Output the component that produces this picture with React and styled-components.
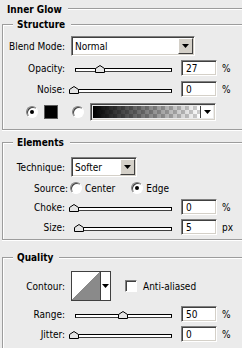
import React from 'react';
import styled, { createGlobalStyle, css } from 'styled-components';

const GlobalStyle = createGlobalStyle`
  html, body {
    margin: 0;
    padding: 0;
    background: #ebebeb;
    overflow: hidden;
  }
  body {
    font-family: "DejaVu Sans Condensed", "Liberation Sans", sans-serif;
    font-size: 10px;
    color: #000;
  }
`;

const sunken = css`
  box-sizing: border-box;
  border: 1px solid;
  border-color: #808080 #fff #fff #808080;
  box-shadow: inset 1px 1px 0 #404040, inset -1px -1px 0 #d4d0c8;
`;

const Panel = styled.div`
  width: 242px;
  height: 348px;
  overflow: hidden;
  background: #ebebeb;
`;

const Header = styled.div`
  display: flex;
  align-items: center;
  gap: 6px;
  height: 18px;
  padding-left: 7px;
  font-weight: bold;
`;

const Rule = styled.div`
  flex: 1;
  border-top: 1px solid #9c9c9c;
  border-bottom: 1px solid #fff;
`;

const Group = styled.fieldset`
  margin: ${p => p.$mt}px -20px 0 2px;
  padding: ${p => p.$pt}px 0 ${p => p.$pb}px 0;
  border: 1px solid #9c9c9c;
  box-shadow: inset 1px 1px 0 #fff, 0 1px 0 #fff;
  min-width: 0;
`;

const Legend = styled.legend`
  margin-left: 10px;
  padding: 0 6px 0 4px;
  line-height: 13px;
  font-weight: bold;
  background: #ebebeb;
`;

const Row = styled.div`
  display: flex;
  align-items: center;
  height: ${p => p.$h}px;
  margin-top: ${p => p.$mt || 0}px;
  padding-left: ${p => p.$pl || 0}px;
`;

const Label = styled.span`
  flex: none;
  width: ${p => p.$w || 62}px;
  margin-right: ${p => (p.$gap === undefined ? 6 : p.$gap)}px;
  text-align: right;
  white-space: nowrap;
`;

const Select = styled.div`
  ${sunken}
  width: ${p => p.$w}px;
  height: 20px;
  padding: 1px 1px 1px 3px;
  background: #fff;
  display: flex;
  align-items: center;
  justify-content: space-between;
`;

const DropButton = styled.span`
  box-sizing: border-box;
  width: 15px;
  height: 16px;
  background: #d4d0c8;
  border: 1px solid;
  border-color: #fff #404040 #404040 #fff;
  display: flex;
  align-items: center;
  justify-content: center;
`;

const NumBox = styled.input`
  ${sunken}
  width: 36px;
  height: 16px;
  margin: 0;
  padding: 0 0 0 4px;
  background: #fff;
  font: inherit;
  color: #000;
  outline: none;
`;

const Unit = styled.span`
  margin-left: 5px;
`;

const SliderWrap = styled.div`
  position: relative;
  flex: none;
  width: 104px;
  height: 10px;
  margin-right: 6px;
`;

const Track = styled.div`
  position: absolute;
  left: 4px;
  right: 3px;
  bottom: 1px;
  height: 2px;
  border: 1px solid #000;
  border-bottom-color: #404040;
  background: #fff;
`;

const Thumb = styled.svg`
  position: absolute;
  top: 2px;
  width: 10px;
  height: 8px;
`;

const Radio = styled.span`
  position: relative;
  flex: none;
  box-sizing: border-box;
  width: 12px;
  height: 12px;
  margin-left: ${p => p.$ml || 0}px;
  border-radius: 50%;
  background: #fff;
  border: 1px solid;
  border-color: #808080 #fff #fff #808080;
  box-shadow: inset 1px 1px 0 #404040;
  &::after {
    content: '';
    display: ${p => (p.$checked ? 'block' : 'none')};
    position: absolute;
    left: 3px;
    top: 3px;
    width: 4px;
    height: 4px;
    border-radius: 50%;
    background: #000;
  }
`;

const RadioText = styled.span`
  margin-left: 3px;
`;

const Swatch = styled.span`
  flex: none;
  width: 14px;
  height: 14px;
  margin-left: 6px;
  box-sizing: border-box;
  border: 1px solid #5a5a5a;
  background: #000;
`;

const GradientBox = styled.div`
  ${sunken}
  display: flex;
  width: 126px;
  height: 18px;
  margin-left: 6px;
  padding: 2px;
`;

const GradientFill = styled.span`
  flex: 1;
  background:
    linear-gradient(to right, #000, rgba(0, 0, 0, 0)),
    conic-gradient(#cfcfcf 25%, #fff 0 50%, #cfcfcf 0 75%, #fff 0) 0 0 / 8px 8px;
`;

const GradientArrow = styled.span`
  width: 12px;
  border-left: 1px solid #404040;
  background: #fff;
  display: flex;
  align-items: center;
  justify-content: center;
`;

const ContourBox = styled.div`
  box-sizing: border-box;
  display: flex;
  width: 40px;
  height: 30px;
  border: 1px solid #404040;
  background: #fff;
`;

const ContourPreview = styled.span`
  width: 28px;
  background: linear-gradient(to bottom right, #fff 50%, #8a8a8a 50%);
  border-right: 1px solid #404040;
`;

const ContourArrow = styled.span`
  flex: 1;
  display: flex;
  align-items: center;
  justify-content: center;
`;

const Check = styled.span`
  flex: none;
  width: 12px;
  height: 12px;
  margin-left: 14px;
  box-sizing: border-box;
  border: 1px solid;
  border-color: #808080 #fff #fff #808080;
  box-shadow: inset 1px 1px 0 #404040;
  background: #fff;
`;

const CheckText = styled.span`
  margin-left: 6px;
`;

const Tri = () => (
  <svg width="7" height="4" viewBox="0 0 7 4">
    <polygon points="0,0 7,0 3.5,4" fill="#000" />
  </svg>
);

const Slider = ({ value }) => (
  <SliderWrap>
    <Track />
    <Thumb viewBox="0 0 10 8" style={{ left: -2 + value * 98 }}>
      <polygon points="0.5,7.5 0.5,3.5 5,0.5 9.5,3.5 9.5,7.5" fill="#e4e4e4" stroke="#000" />
    </Thumb>
  </SliderWrap>
);

const SliderRow = ({ label, value, frac, unit, h, mt }) => (
  <Row $h={h} $mt={mt}>
    <Label>{label}</Label>
    <Slider value={frac} />
    <NumBox readOnly value={value} />
    <Unit>{unit}</Unit>
  </Row>
);

export default function App() {
  return (
    <Panel>
      <GlobalStyle />
      <Header>
        Inner Glow
        <Rule />
      </Header>

      <Group $mt={0} $pt={5} $pb={8}>
        <Legend>Structure</Legend>
        <Row $h={20}>
          <Label>Blend Mode:</Label>
          <Select $w={124}>
            Normal
            <DropButton><Tri /></DropButton>
          </Select>
        </Row>
        <SliderRow label="Opacity:" value="27" frac={0.27} unit="%" h={18} mt={3} />
        <SliderRow label="Noise:" value="0" frac={0} unit="%" h={18} mt={3} />
        <Row $h={19} $mt={4} $pl={23}>
          <Radio $checked />
          <Swatch />
          <Radio $ml={14} />
          <GradientBox>
            <GradientFill />
            <GradientArrow><Tri /></GradientArrow>
          </GradientBox>
        </Row>
      </Group>

      <Group $mt={6} $pt={8} $pb={3}>
        <Legend>Elements</Legend>
        <Row $h={20}>
          <Label>Technique:</Label>
          <Select $w={66}>
            Softer
            <DropButton><Tri /></DropButton>
          </Select>
        </Row>
        <Row $h={20} $mt={1}>
          <Label $w={65} $gap={2}>Source:</Label>
          <Radio />
          <RadioText>Center</RadioText>
          <Radio $ml={16} $checked />
          <RadioText>Edge</RadioText>
        </Row>
        <SliderRow label="Choke:" value="0" frac={0} unit="%" h={18} />
        <SliderRow label="Size:" value="5" frac={0.05} unit="px" h={18} mt={2} />
      </Group>

      <Group $mt={11} $pt={7} $pb={14}>
        <Legend>Quality</Legend>
        <Row $h={30}>
          <Label>Contour:</Label>
          <ContourBox>
            <ContourPreview />
            <ContourArrow><Tri /></ContourArrow>
          </ContourBox>
          <Check />
          <CheckText>Anti-aliased</CheckText>
        </Row>
        <SliderRow label="Range:" value="50" frac={0.5} unit="%" h={20} mt={3} />
        <SliderRow label="Jitter:" value="0" frac={0} unit="%" h={20} />
      </Group>
    </Panel>
  );
}
